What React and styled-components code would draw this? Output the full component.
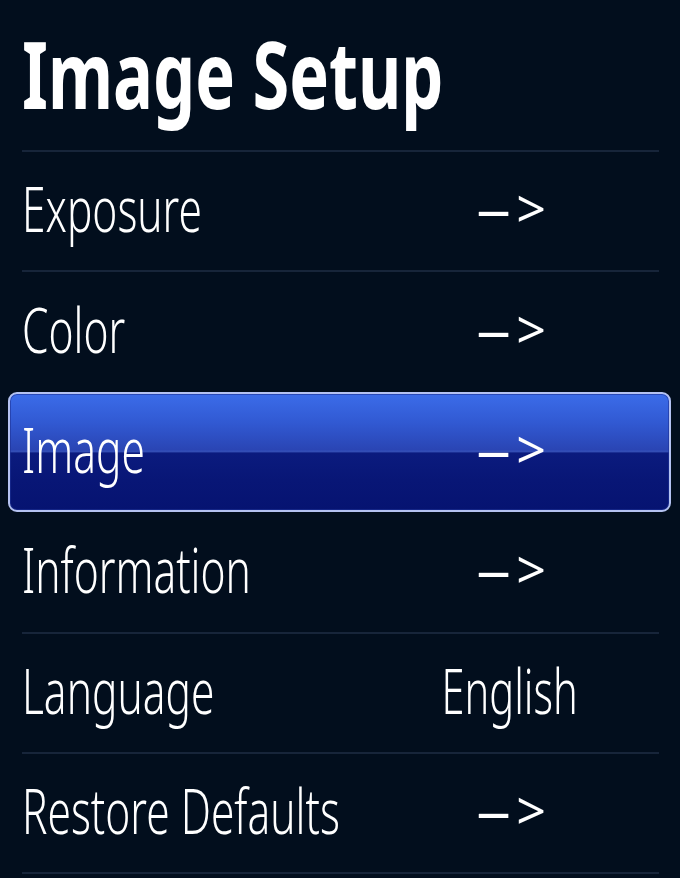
import React from "react";
import styled, { createGlobalStyle } from "styled-components";

const GlobalStyle = createGlobalStyle`
  html, body {
    margin: 0;
    padding: 0;
    background: #020e1d;
  }
  body {
    font-family: "Noto Sans", "Open Sans", sans-serif;
    color: #ffffff;
  }
`;

const items = [
  { label: "Exposure", arrow: true },
  { label: "Color", arrow: true },
  { label: "Image", arrow: true, selected: true },
  { label: "Information", arrow: true },
  { label: "Language", value: "English" },
  { label: "Restore Defaults", arrow: true },
];

function App() {
  return (
    <>
      <GlobalStyle />
      <Screen>
        <Header>
          <Title>Image Setup</Title>
        </Header>
        <Menu>
          {items.map((item, i) => {
            const nextSelected = items[i + 1] && items[i + 1].selected;
            return (
              <Row key={item.label} selected={item.selected} hideLine={nextSelected}>
                <Label>{item.label}</Label>
                <ValueCell>
                  {item.arrow ? (
                    <Arrow>
                      <Dash>–</Dash>&gt;
                    </Arrow>
                  ) : (
                    <Value>{item.value}</Value>
                  )}
                </ValueCell>
              </Row>
            );
          })}
        </Menu>
      </Screen>
    </>
  );
}

const Screen = styled.div`
  width: 680px;
  height: 878px;
  background: #020e1d;
  overflow: hidden;
  display: flex;
  flex-direction: column;
`;

const Header = styled.div`
  height: 152px;
  box-sizing: border-box;
  margin: 0 21px 0 22px;
  border-bottom: 2px solid #17253a;
  display: flex;
  align-items: center;
`;

const Title = styled.h1`
  margin: 0;
  font-size: 94px;
  font-weight: 700;
  line-height: 1;
  white-space: nowrap;
  transform: scaleX(0.71);
  transform-origin: left center;
  padding-bottom: 4px;
`;

const Menu = styled.div`
  display: flex;
  flex-direction: column;
`;

const Row = styled.div`
  display: grid;
  grid-template-columns: minmax(0, 1fr) 298px;
  align-items: center;
  margin: 0 21px 0 22px;
  border-bottom: 2px solid ${(p) => (p.hideLine ? "transparent" : "#17253a")};
  box-sizing: border-box;
  height: 120.4px;

  ${(p) =>
    p.selected &&
    `
    margin: -1px 9px 1px 8px;
    padding: 0 10px 0 12px;
    border: 2px solid #b4c2f2;
    border-radius: 9px;
    background: linear-gradient(
      to bottom,
      #3b6ce9 0%,
      #3159d2 25%,
      #2a45b4 48%,
      #3550b8 49.5%,
      #0b1b7e 51%,
      #081676 75%,
      #061371 100%
    );
    box-shadow: inset 0 0 0 1px rgba(30, 50, 150, 0.6);
  `}
`;

const Label = styled.span`
  display: inline-block;
  font-size: 62px;
  font-weight: 300;
  line-height: 1;
  white-space: nowrap;
  transform: scaleX(0.685);
  transform-origin: left center;
  padding-bottom: 6px;
`;

const ValueCell = styled.div`
  display: flex;
  justify-content: center;
`;

const Value = styled.span`
  display: inline-block;
  font-size: 62px;
  font-weight: 300;
  line-height: 1;
  white-space: nowrap;
  transform: scaleX(0.67);
  transform-origin: center center;
  padding-bottom: 6px;
`;

const Arrow = styled.span`
  display: inline-block;
  font-size: 52px;
  font-weight: 400;
  line-height: 1;
  white-space: nowrap;
  padding-bottom: 6px;
  margin-left: 2px;
`;

const Dash = styled.span`
  display: inline-block;
  transform: scaleX(1.35);
  transform-origin: left center;
  margin-right: 14px;
`;

export default App;
